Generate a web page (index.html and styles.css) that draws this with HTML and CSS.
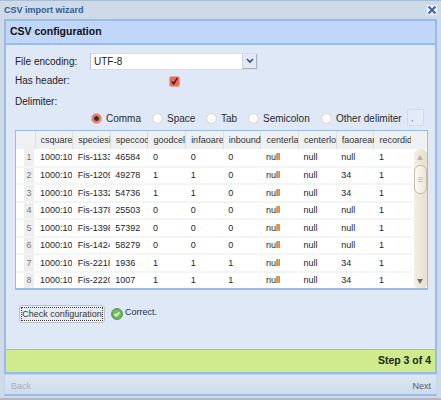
FILE: index.html
```html
<!DOCTYPE html>
<html>
<head>
  <meta charset="utf-8"/>
  <title>CSV import wizard</title>
  <link rel="stylesheet" href="styles.css">
</head>
<body>

<div class="window">
  <div class="window-title">
    <span>CSV import wizard</span>
    <span class="close">
      <svg width="10" height="10" viewBox="2 2 10 10"><path d="M3.5 3.5l7 7M10.5 3.5l-7 7" stroke="#3f62a8" stroke-width="2" fill="none"/></svg>
    </span>
  </div>

  <div class="panel">
    <h1>CSV configuration</h1>
    <div class="panel-body">
      <div class="row row-encoding">
        <label class="field">File encoding:</label>
        <div class="select">
          <span class="select-value">UTF-8</span>
          <span class="select-arrow">
            <svg width="8" height="6" viewBox="0 0 8 6"><path d="M1 1l3 3 3-3" stroke="#2f4f96" stroke-width="1.6" fill="none"/></svg>
          </span>
        </div>
      </div>
      <div class="row row-header">
        <label class="field">Has header:</label>
        <svg class="checkbox" width="11" height="11" viewBox="0 0 11 11">
          <rect x="0.5" y="0.5" width="10" height="10" rx="2" fill="#ee6a57" stroke="#e2a79b"/>
          <path d="M2.8 5.5l2 2.3 3.4-5.6" stroke="#3a1410" stroke-width="1.4" fill="none"/>
        </svg>
      </div>
      <div class="row row-delimiter">
        <label class="field">Delimiter:</label>
      </div>
      <div class="radios">
        <span class="radio radio-comma"><i class="dot on"></i>Comma</span>
        <span class="radio radio-space"><i class="dot"></i>Space</span>
        <span class="radio radio-tab"><i class="dot"></i>Tab</span>
        <span class="radio radio-semi"><i class="dot"></i>Semicolon</span>
        <span class="radio radio-other"><i class="dot"></i>Other delimiter</span>
        <span class="other-input">,</span>
      </div>

      <div class="grid">
        <table class="grid-head">
          <tr>
            <th class="num"></th>
            <th><div>csquare</div></th><th><div>speciesi</div></th><th><div>speccoc</div></th><th><div>goodcell</div></th><th><div>infaoare</div></th>
            <th><div>inboundl</div></th><th><div>centerla</div></th><th><div>centerlo</div></th><th><div>faoarear</div></th><th><div>recordid</div></th>
          </tr>
        </table>
        <div class="grid-main">
          <table class="grid-rows">
            <tr><td class="num">1</td><td><div>1000:10</div></td><td><div>Fis-1133</div></td><td>46584</td><td>0</td><td>0</td><td>0</td><td>null</td><td>null</td><td>null</td><td>1</td></tr>
            <tr><td class="num">2</td><td><div>1000:10</div></td><td><div>Fis-1209</div></td><td>49278</td><td>1</td><td>1</td><td>0</td><td>null</td><td>null</td><td>34</td><td>1</td></tr>
            <tr><td class="num">3</td><td><div>1000:10</div></td><td><div>Fis-1332</div></td><td>54736</td><td>1</td><td>1</td><td>0</td><td>null</td><td>null</td><td>34</td><td>1</td></tr>
            <tr><td class="num">4</td><td><div>1000:10</div></td><td><div>Fis-1378</div></td><td>25503</td><td>0</td><td>0</td><td>0</td><td>null</td><td>null</td><td>null</td><td>1</td></tr>
            <tr><td class="num">5</td><td><div>1000:10</div></td><td><div>Fis-1398</div></td><td>57392</td><td>0</td><td>0</td><td>0</td><td>null</td><td>null</td><td>null</td><td>1</td></tr>
            <tr><td class="num">6</td><td><div>1000:10</div></td><td><div>Fis-1424</div></td><td>58279</td><td>0</td><td>0</td><td>0</td><td>null</td><td>null</td><td>null</td><td>1</td></tr>
            <tr><td class="num">7</td><td><div>1000:10</div></td><td><div>Fis-2218</div></td><td>1936</td><td>1</td><td>1</td><td>1</td><td>null</td><td>null</td><td>34</td><td>1</td></tr>
            <tr><td class="num">8</td><td><div>1000:10</div></td><td><div>Fis-2220</div></td><td>1007</td><td>1</td><td>1</td><td>1</td><td>null</td><td>null</td><td>34</td><td>1</td></tr>
          </table>
          <div class="scrollbar">
            <span class="arrow arrow-up"></span>
            <span class="thumb"><i></i><i></i><i></i></span>
            <span class="arrow arrow-down"></span>
          </div>
        </div>
      </div>

      <div class="check">
        <button class="check-btn"><span>Check configuration</span></button>
        <svg class="ok" width="12" height="12" viewBox="0 0 12 12">
          <circle cx="6" cy="6" r="5.5" fill="#5cb04a" stroke="#5d9c58"/>
          <circle cx="6" cy="6" r="3.8" fill="#79bf66"/>
          <path d="M3.6 6l1.7 1.7 3-3.2" stroke="#fff" stroke-width="1.5" fill="none"/>
        </svg>
        <span class="ok-text">Correct.</span>
      </div>
    </div>
    <div class="step">Step 3 of 4</div>
  </div>

  <div class="footer">
    <span class="back">Back</span>
    <span class="next">Next</span>
  </div>
</div>

</body>
</html>
```
FILE: styles.css
```css
html, body {
  margin: 0;
  padding: 0;
}
body {
  width: 441px;
  height: 400px;
  overflow: hidden;
  font-family: "Liberation Sans", Arial, sans-serif;
  font-size: 10px;
  color: #222;
}
.window {
  background-color: #cfdae8;
  border-top: 1px solid #a9bcd6;
  border-bottom: 2px solid #b4b8be;
  box-sizing: border-box;
  height: 400px;
  padding: 0 4px;
}
.window-title {
  height: 18px;
  display: flex;
  justify-content: space-between;
  align-items: center;
  color: #2f5a98;
  font-weight: bold;
  font-size: 9px;
}
.close {
  width: 10px;
  height: 10px;
  display: flex;
  align-items: center;
  justify-content: center;
  background-color: #eef3fb;
}
.panel {
  height: 353px;
  border: 2px solid #97bbea;
  border-bottom: 0;
  display: flex;
  flex-direction: column;
  background-color: #dfe8f6;
}
h1 {
  margin: 0;
  height: 24px;
  box-sizing: border-box;
  line-height: 21px;
  padding-left: 4px;
  font-size: 10.5px;
  color: #111;
  background-color: #c0d6fb;
  border-bottom: 2px solid #97bbea;
}
.panel-body {
  flex: 1;
  padding: 8px 8px 0 9px;
  box-sizing: border-box;
}
.row {
  display: flex;
  align-items: center;
}
.field {
  width: 75px;
}
.row-encoding {
  height: 17px;
}
.select {
  width: 168px;
  height: 17px;
  box-sizing: border-box;
  display: flex;
  background-color: #fff;
  border: 1px solid #d6dde8;
  border-left-color: #b9c0cc;
}
.select-value {
  flex: 1;
  padding-left: 3px;
  line-height: 15px;
}
.select-arrow {
  width: 13px;
  display: flex;
  align-items: center;
  justify-content: center;
  background-color: #e2e9f4;
  border-left: 1px solid #c9d2df;
  border-right: 1px solid #aab3c0;
  border-bottom: 1px solid #aab3c0;
}
.row-header {
  height: 16px;
  margin-top: 2px;
}
.checkbox {
  margin-left: 79px;
  margin-top: 2px;
}
.row-delimiter {
  height: 14px;
  margin-top: 6px;
}
.radios {
  height: 18px;
  display: flex;
  align-items: center;
  margin-left: 76px;
  margin-top: 1px;
  color: #2a2a2a;
}
.radio {
  display: flex;
  align-items: center;
  white-space: nowrap;
}
.dot {
  width: 11px;
  height: 11px;
  box-sizing: border-box;
  border-radius: 50%;
  background-color: #fbfbf8;
  border: 1px solid #d9d5ca;
  margin-right: 4px;
  flex: none;
}
.dot.on {
  background: radial-gradient(circle, #333 0, #333 2px, #f26f5c 2.6px, #f4806e 100%);
  border-color: #e7a89d;
}
.radio-comma { width: 61px; }
.radio-space { width: 54px; }
.radio-tab { width: 42px; }
.radio-semi { width: 73px; }
.radio-other { width: 86px; }
.other-input {
  width: 17px;
  height: 17px;
  box-sizing: border-box;
  background-color: #e4ebf6;
  border: 1px solid #d3dae4;
  color: #777;
  padding: 3px 0 0 3px;
  font-size: 9px;
  margin-top: -1px;
}
.grid {
  width: 413px;
  height: 160px;
  margin-top: 3px;
  box-sizing: border-box;
  border: 1px solid #97bbea;
  border-bottom-width: 2px;
  background-color: #fff;
  overflow: hidden;
}
table {
  border-collapse: collapse;
  table-layout: fixed;
  font-size: 9px;
}
.grid-head {
  width: 411px;
  height: 18px;
  background-color: #eef0f2;
  color: #333;
}
th {
  font-weight: normal;
  text-align: left;
  padding: 0 0 0 5px;
  width: 37.67px;
  border-right: 1px solid #dcdcdc;
  box-sizing: border-box;
}
th:last-child {
  width: auto;
  border-right: 0;
}
th div, td div {
  overflow: hidden;
  white-space: nowrap;
  width: 32px;
}
th.num, td.num {
  width: 19px;
}
.grid-main {
  display: flex;
  justify-content: space-between;
  height: 140px;
}
.grid-rows {
  width: 395.7px;
  flex: none;
}
tr {
  height: 17.5px;
}
td {
  padding: 0 0 0 5px;
  width: 37.67px;
  border-bottom: 2px solid #f3f4f4;
  box-sizing: border-box;
  color: #24242a;
  white-space: nowrap;
  overflow: hidden;
}
td.num {
  background: linear-gradient(to right, #fff 0, #fff 8px, #eeeeee 8px, #eeeeee 18px, #fff 18px);
  color: #777;
  text-align: center;
  padding: 0 1px 0 8px;
}
.scrollbar {
  width: 13px;
  flex: none;
  background: linear-gradient(to right, #f4efe4, #e7dfcf);
  border-radius: 5px;
  position: relative;
  box-sizing: border-box;
}
.arrow {
  position: absolute;
  left: 3px;
  border-left: 3px solid transparent;
  border-right: 3px solid transparent;
}
.arrow-up {
  top: 6px;
  border-bottom: 5px solid #b9b4a8;
}
.arrow-down {
  bottom: 5px;
  border-top: 5px solid #77746c;
}
.thumb {
  position: absolute;
  top: 16px;
  left: 0;
  width: 13px;
  height: 29px;
  box-sizing: border-box;
  background: linear-gradient(to right, #fbfaf6, #ece5d6);
  border: 1px solid #c6bca7;
  border-radius: 6px;
  display: flex;
  flex-direction: column;
  justify-content: center;
  gap: 1px;
  align-items: center;
}
.thumb i {
  display: block;
  width: 5px;
  height: 1px;
  background-color: #cfc7b6;
}
.check {
  display: flex;
  align-items: center;
  margin-top: 15px;
  margin-left: 4px;
  font-size: 9px;
}
.check-btn {
  width: 86px;
  height: 18px;
  padding: 1px;
  background-color: #e8edf5;
  border: 1px solid #bcc3cc;
  border-radius: 3px;
  font-family: inherit;
  font-size: 9px;
  color: #333;
}
.check-btn span {
  display: block;
  border: 1px dotted #444;
  height: 14px;
  line-height: 12px;
  box-sizing: border-box;
  white-space: nowrap;
}
.ok {
  margin-left: 6px;
}
.ok-text {
  margin-left: 2px;
  margin-top: -4px;
  color: #222c48;
}
.step {
  height: 25px;
  line-height: 20px;
  box-sizing: border-box;
  background-color: #cfeb8b;
  border-top: 1px solid #97bbea;
  border-bottom: 2px solid #97bbea;
  text-align: right;
  padding-right: 4px;
  font-weight: bold;
  font-size: 10.5px;
  color: #222;
}
.footer {
  height: 22px;
  box-sizing: border-box;
  border: 1px solid #c3d5ee;
  border-bottom: 2px solid #97bbea;
  background: linear-gradient(to bottom, #dde6f3, #cfdcee);
  display: flex;
  justify-content: space-between;
  align-items: center;
  padding: 3px 5px 0 6px;
  font-size: 9px;
}
.back {
  color: #a8afba;
}
.next {
  color: #555c68;
}
```
